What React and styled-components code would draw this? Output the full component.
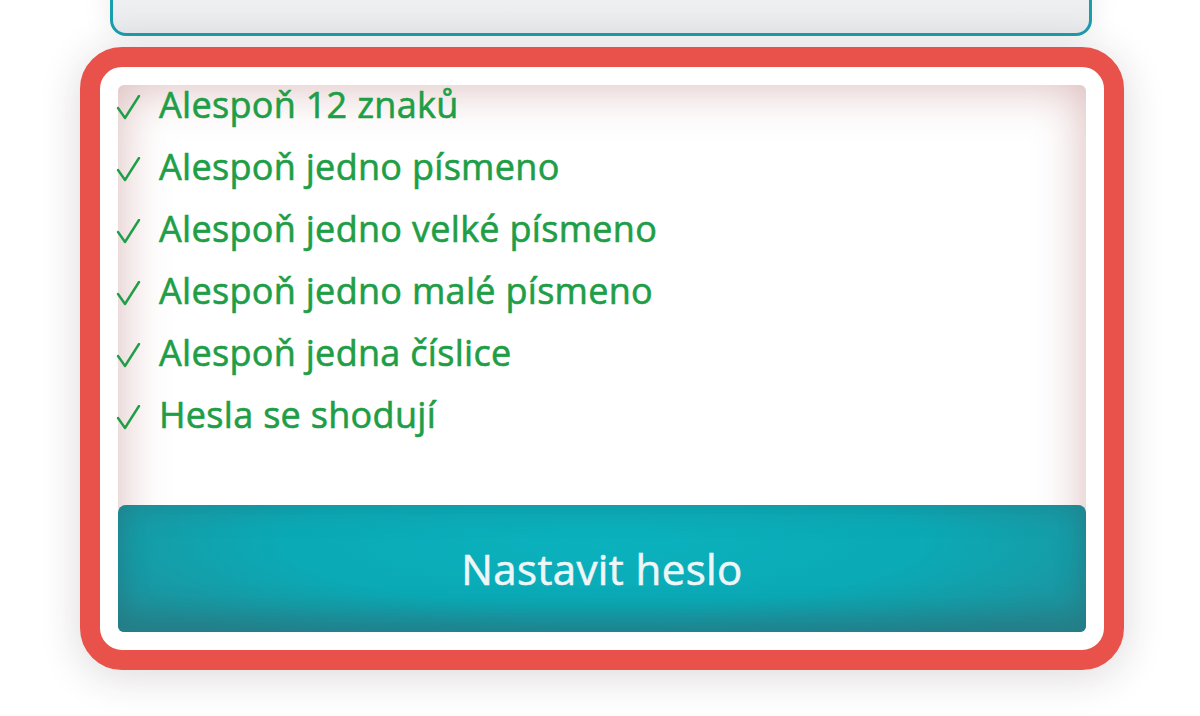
import React from 'react';
import styled, { createGlobalStyle } from 'styled-components';

const GlobalStyle = createGlobalStyle`
    html, body {
        margin: 0;
        padding: 0;
        background: #ffffff;
        overflow: hidden;
    }
    body {
        font-family: "Open Sans", Lato, sans-serif;
    }
`;

const Page = styled.div`
    width: 1200px;
    height: 716px;
    padding-left: 80px;
    box-sizing: border-box;
    overflow: hidden;
`;

const Column = styled.div`
    width: 1044px;
    display: flex;
    flex-direction: column;
    gap: 11px;
`;

const Input = styled.div`
    margin: -30px 32px 0 30px;
    height: 60px;
    border: 3px solid #1a9dad;
    border-radius: 16px;
    background: linear-gradient(180deg, #f4f4f6 0%, #e8e9ec 100%);
    box-shadow: 0 0 30px rgba(0, 0, 0, 0.08);
`;

const Frame = styled.div`
    height: 623px;
    box-sizing: border-box;
    border: 20px solid #e8524a;
    border-radius: 42px;
    padding: 18px;
    background: #ffffff;
    box-shadow: 0 6px 40px rgba(60, 40, 40, 0.18);
    display: flex;
`;

const Content = styled.div`
    flex: 1;
    display: flex;
    flex-direction: column;
    border-radius: 6px;
    background: #ffffff;
    box-shadow: inset 0 0 50px rgba(170, 95, 95, 0.45);
`;

const List = styled.ul`
    list-style: none;
    margin: -12px 0 0;
    padding: 0;
    flex: 1;
`;

const Item = styled.li`
    display: flex;
    align-items: center;
    gap: 17px;
    height: 62px;
    font-size: 36px;
    letter-spacing: 0.3px;
    -webkit-text-stroke: 0.6px ${props => props.ok ? '#1e9e46' : '#c0392b'};
    color: ${props => props.ok ? '#1e9e46' : '#c0392b'};
`;

const Check = styled.svg`
    width: 26px;
    height: 26px;
    margin: 8px 0 0 -2px;
    flex-shrink: 0;
`;

const Button = styled.button`
    height: 127px;
    border: none;
    border-radius: 8px 8px 6px 6px;
    background: radial-gradient(ellipse 60% 90% at 50% 30%, #0ab2bd 0%, #0aaab6 55%, #1f929c 100%);
    box-shadow: inset 0 -18px 26px rgba(40, 110, 120, 0.45), inset 0 0 30px rgba(40, 110, 120, 0.35);
    color: #eef6f7;
    font-family: "Open Sans", Lato, sans-serif;
    font-size: 42px;
    letter-spacing: 0.4px;
    -webkit-text-stroke: 0.6px #eef6f7;
    padding-top: 0;
    cursor: pointer;
`;

const rules = [
    'Alespoň 12 znaků',
    'Alespoň jedno písmeno',
    'Alespoň jedno velké písmeno',
    'Alespoň jedno malé písmeno',
    'Alespoň jedna číslice',
    'Hesla se shodují',
];

const App = () => {
    return (
        <>
            <GlobalStyle />
            <Page>
                <Column>
                    <Input />
                    <Frame>
                        <Content>
                            <List>
                                {rules.map(rule => (
                                    <Item key={rule} ok>
                                        <Check viewBox="0 0 26 26">
                                            <polyline points="2,13 9,23 23,1" fill="none" stroke="#1e9e46" strokeWidth="2.4" strokeLinecap="round" strokeLinejoin="round" />
                                        </Check>
                                        <span>{rule}</span>
                                    </Item>
                                ))}
                            </List>
                            <Button>Nastavit heslo</Button>
                        </Content>
                    </Frame>
                </Column>
            </Page>
        </>
    );
};

export default App;
